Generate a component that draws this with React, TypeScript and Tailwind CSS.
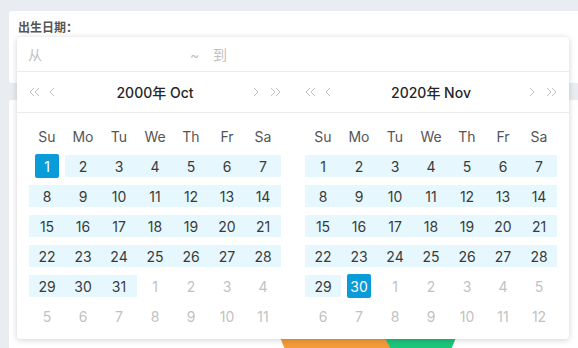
import React from "react";

type Cell = { d: number; cur: boolean; band: boolean; sel: boolean };

function buildMonth(days: number, selDay: number, bandFrom: number, bandTo: number): Cell[][] {
  const cells: Cell[] = [];
  for (let i = 1; i <= days; i++) {
    cells.push({ d: i, cur: true, band: i >= bandFrom && i <= bandTo && i !== selDay, sel: i === selDay });
  }
  let n = 1;
  while (cells.length < 42) {
    cells.push({ d: n++, cur: false, band: false, sel: false });
  }
  const rows: Cell[][] = [];
  for (let r = 0; r < 6; r++) rows.push(cells.slice(r * 7, r * 7 + 7));
  return rows;
}

const WEEK = ["Su", "Mo", "Tu", "We", "Th", "Fr", "Sa"];

function Chev({ double, dir }: { double?: boolean; dir: "l" | "r" }) {
  const w = double ? 11 : 6;
  const one = (x: number) =>
    dir === "l" ? `M${x + 4} 1 L${x} 5 L${x + 4} 9` : `M${x} 1 L${x + 4} 5 L${x} 9`;
  return (
    <svg width={w} height="10" viewBox={`0 0 ${w} 10`} fill="none" stroke="#bfbfbf" strokeWidth="1">
      <path d={one(1)} />
      {double && <path d={one(6)} />}
    </svg>
  );
}

function Panel({ title, rows }: { title: string; rows: Cell[][] }) {
  return (
    <div className="w-[276px]">
      <div className="h-[41px] border-b border-[#ebebeb] px-3 flex items-center">
        <div className="flex items-center gap-[9px] w-[40px]">
          <Chev double dir="l" />
          <Chev dir="l" />
        </div>
        <div className="flex-1 text-center text-[14px] font-medium text-[#262626]">{title}</div>
        <div className="flex items-center justify-end gap-[11px] w-[40px]">
          <Chev dir="r" />
          <Chev double dir="r" />
        </div>
      </div>
      <div className="px-3 pt-[8px]">
        <div className="grid grid-cols-7">
          {WEEK.map((w) => (
            <div key={w} className="h-[30px] flex items-center justify-center text-[14px] text-[#555]">
              {w}
            </div>
          ))}
        </div>
        {rows.map((row, ri) => (
          <div key={ri} className="grid grid-cols-7">
            {row.map((c, ci) => (
              <div key={ci} className="h-[30px] flex items-center">
                <div
                  className={
                    "w-full h-[22px] flex items-center justify-center text-[14px] " +
                    (c.band ? "bg-[#e6f8fe] " : "") +
                    (c.cur ? "text-[#3a3a3a]" : "text-[#c2c2c2]")
                  }
                >
                  {c.sel ? (
                    <span className="w-6 h-6 rounded-[2px] bg-[#0a9bd9] text-white flex items-center justify-center">
                      {c.d}
                    </span>
                  ) : (
                    <span>{c.d}</span>
                  )}
                </div>
              </div>
            ))}
          </div>
        ))}
      </div>
    </div>
  );
}

export default function App() {
  const left = buildMonth(31, 1, 1, 31);
  const right = buildMonth(30, 30, 1, 30);
  const cx = 359;
  const cy = 207;
  const r = 93;
  return (
    <div
      className="relative w-[578px] h-[348px] overflow-hidden bg-[#e9ecf1] pl-[9px] pt-[11px]"
      style={{ fontFamily: 'Inter, "Noto Sans CJK SC", sans-serif' }}
    >
      <div className="w-[600px] h-[72px] bg-white rounded-[3px] pl-[9px] pt-[9px]">
        <div className="text-[12px] font-semibold text-[#555] leading-[16px]">出生日期：</div>
      </div>
      <div className="mt-[17px] w-[600px] h-[260px] bg-white rounded-[3px]">
        <svg width="600" height="260">
          <circle cx={cx} cy={cy} r={r} fill="#f49b38" />
          <path
            d={`M${cx} ${cy} L${cx + r * Math.cos(-Math.PI / 3)} ${cy + r * Math.sin(-Math.PI / 3)} A${r} ${r} 0 0 1 ${
              cx + r * Math.cos((61.4 * Math.PI) / 180)
            } ${cy + r * Math.sin((61.4 * Math.PI) / 180)} Z`}
            fill="#1cc57a"
          />
        </svg>
      </div>
      <div className="absolute left-[17px] top-[37px] w-[552px] h-[302px] bg-white rounded-[4px] shadow-[0_1px_6px_rgba(0,0,0,0.18)]">
        <div className="h-[35px] border-b border-[#ebebeb] flex items-center pl-[11px] text-[14px] text-[#bfbfbf]">
          <span className="w-[162px]">从</span>
          <span className="w-[23px]">~</span>
          <span>到</span>
        </div>
        <div className="flex">
          <Panel title="2000年 Oct" rows={left} />
          <Panel title="2020年 Nov" rows={right} />
        </div>
      </div>
    </div>
  );
}
